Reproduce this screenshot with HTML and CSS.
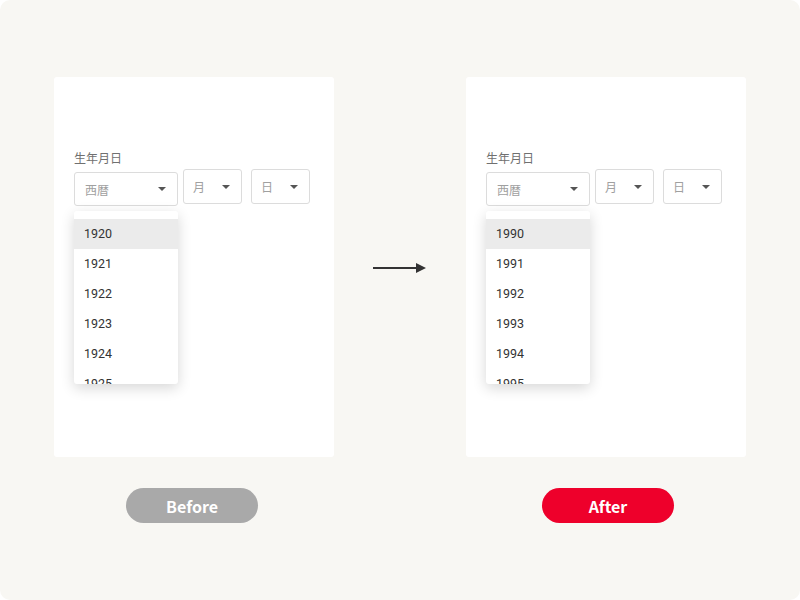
FILE: index.html
```html
<!DOCTYPE html>
<html lang="ja">
<head>
<meta charset="utf-8">
<link rel="stylesheet" href="styles.css">
</head>
<body>
<div class="canvas">
  <div class="col">
    <div class="panel">
      <div class="label">生年月日</div>
      <div class="selects">
        <div class="select year">
          <span>西暦</span><i class="caret"></i>
          <div class="dropdown">
            <div class="opt active">1920</div>
            <div class="opt">1921</div>
            <div class="opt">1922</div>
            <div class="opt">1923</div>
            <div class="opt">1924</div>
            <div class="opt">1925</div>
          </div>
        </div>
        <div class="select small"><span>月</span><i class="caret"></i></div>
        <div class="select small day"><span>日</span><i class="caret"></i></div>
      </div>
    </div>
    <div class="btn before">Before</div>
  </div>
  <div class="arrow">
    <svg width="54" height="12" viewBox="0 0 54 12"><line x1="0" y1="6" x2="45" y2="6" stroke="#333" stroke-width="2"/><polygon points="43,1 53,6 43,11" fill="#333"/></svg>
  </div>
  <div class="col">
    <div class="panel">
      <div class="label">生年月日</div>
      <div class="selects">
        <div class="select year">
          <span>西暦</span><i class="caret"></i>
          <div class="dropdown">
            <div class="opt active">1990</div>
            <div class="opt">1991</div>
            <div class="opt">1992</div>
            <div class="opt">1993</div>
            <div class="opt">1994</div>
            <div class="opt">1995</div>
          </div>
        </div>
        <div class="select small"><span>月</span><i class="caret"></i></div>
        <div class="select small day"><span>日</span><i class="caret"></i></div>
      </div>
    </div>
    <div class="btn after">After</div>
  </div>
</div>
</body>
</html>
```

FILE: styles.css
```css
* { box-sizing: border-box; }
html, body { margin: 0; padding: 0; background: #ffffff; }
.canvas {
  width: 800px;
  height: 600px;
  background: #f8f7f3;
  border-radius: 10px;
  display: flex;
  align-items: flex-start;
  padding: 77px 0 0 54px;
  font-family: "Noto Sans CJK JP", "Noto Sans", sans-serif;
}
.col {
  width: 280px;
  display: flex;
  flex-direction: column;
  align-items: center;
}
.panel {
  width: 280px;
  height: 380px;
  background: #ffffff;
  border-radius: 3px;
  padding: 73px 0 0 20px;
}
.label {
  font-size: 12px;
  line-height: 16px;
  color: #707070;
  margin-bottom: 3px;
}
.selects {
  display: flex;
  align-items: flex-start;
}
.select {
  position: relative;
  height: 35px;
  border: 1px solid #dcdcdc;
  border-radius: 3px;
  display: flex;
  align-items: center;
  justify-content: space-between;
  font-size: 12px;
  color: #a0a0a0;
}
.select.year {
  width: 104px;
  height: 34px;
  margin-top: 3px;
  padding: 0 11px 0 10px;
}
.select.small {
  width: 59px;
  margin-left: 5px;
  padding: 0 11px 0 9px;
}
.select.day { margin-left: 9px; }
.caret {
  width: 0;
  height: 0;
  border-left: 4px solid transparent;
  border-right: 4px solid transparent;
  border-top: 4px solid #555;
}
.dropdown {
  position: absolute;
  left: -1px;
  top: 38px;
  width: 104px;
  height: 173px;
  overflow: hidden;
  background: #fff;
  border-radius: 3px;
  box-shadow: 0 4px 14px rgba(0, 0, 0, 0.16);
  padding-top: 8px;
  z-index: 2;
}
.opt {
  height: 30px;
  line-height: 30px;
  padding-left: 10px;
  font-family: Roboto, "Noto Sans", sans-serif;
  font-size: 12.5px;
  color: #333;
}
.opt.active { background: #ebebeb; }
.arrow {
  width: 132px;
  margin-top: 185px;
  display: flex;
  justify-content: center;
}
.btn {
  margin-top: 31px;
  width: 132px;
  height: 35px;
  border-radius: 18px;
  color: #fff;
  font-weight: 700;
  font-size: 16px;
  display: flex;
  align-items: center;
  justify-content: center;
  margin-left: -4px;
}
.btn.before { background: #a9a9a9; }
.btn.after { background: #ee002b; margin-left: 4px; }
```
